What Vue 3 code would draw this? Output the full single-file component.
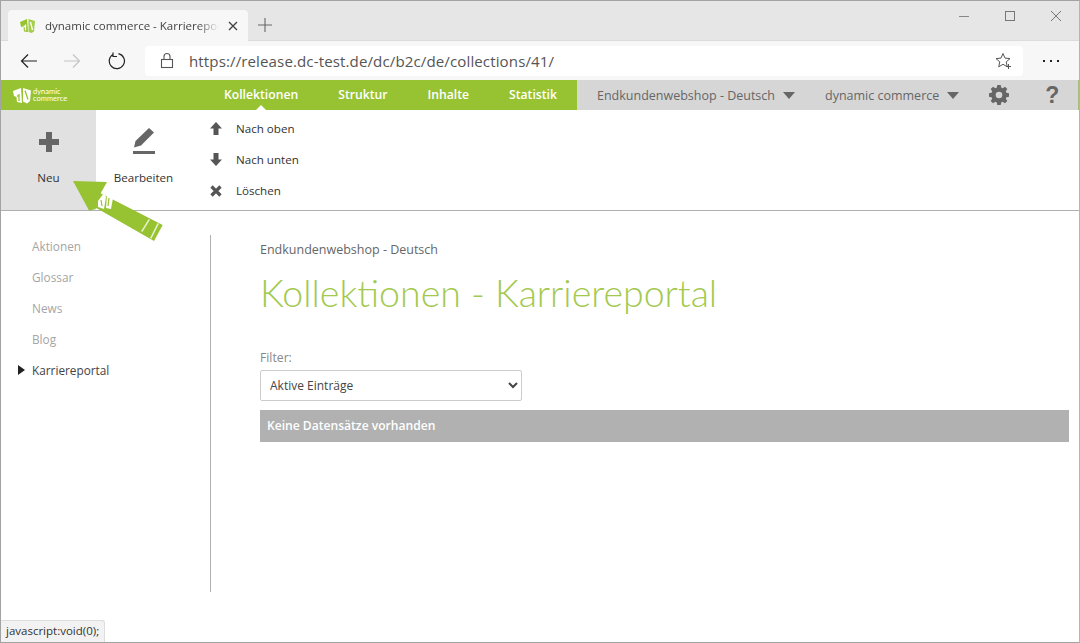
<script setup>
const navItems = ['Kollektionen', 'Struktur', 'Inhalte', 'Statistik']
const sideItems = ['Aktionen', 'Glossar', 'News', 'Blog', 'Karriereportal']
</script>

<template>
  <div class="window">
    <!-- browser chrome -->
    <div class="tabstrip">
      <div class="tab">
        <svg class="favicon" width="16" height="16" viewBox="0 0 16 16">
          <path d="M0 4l7-3 1 13-4-.5-.5-5L1 9z" fill="#97c332" />
          <path d="M8.500 1L15 3l-1 10.500-2.500 1.500-3-1z" fill="#a5cf48" />
          <path d="M5.500 6.500v6M3.500 8.500h2M10.500 4l2 8" stroke="#fff" stroke-width="1.300" fill="none" />
        </svg>
        <span class="tab-title">dynamic commerce - Karrierepor</span>
        <svg class="tab-close" width="10" height="10" viewBox="0 0 10 10">
          <path d="M1 1l8 8M9 1l-8 8" stroke="#444" stroke-width="1.400" />
        </svg>
      </div>
      <svg class="new-tab" width="14" height="14" viewBox="0 0 14 14">
        <path d="M7 0v14M0 7h14" stroke="#666" stroke-width="1.100" />
      </svg>
      <div class="win-btns">
        <svg width="12" height="12" viewBox="0 0 12 12"><path d="M1 6.500h10" stroke="#888" /></svg>
        <svg width="12" height="12" viewBox="0 0 12 12"><rect x="1.500" y="1.500" width="9" height="9" fill="none" stroke="#777" /></svg>
        <svg width="12" height="12" viewBox="0 0 12 12"><path d="M1 1l10 10M11 1L1 11" stroke="#777" /></svg>
      </div>
    </div>
    <div class="toolbar">
      <svg class="tool" width="18" height="16" viewBox="0 0 18 16">
        <path d="M17 8H1.500M8 1.500L1.500 8 8 14.500" fill="none" stroke="#222" stroke-width="1.200" />
      </svg>
      <svg class="tool" width="18" height="16" viewBox="0 0 18 16">
        <path d="M1 8h15.500M10 1.500L16.500 8 10 14.500" fill="none" stroke="#c4c4c4" stroke-width="1.200" />
      </svg>
      <svg class="tool reload" width="18" height="18" viewBox="0 0 18 18">
        <path d="M5.500 2.200A7.600 7.600 0 1 0 10.500 1.600M5 .5v4h4" fill="none" stroke="#222" stroke-width="1.200" />
      </svg>
      <div class="address">
        <svg width="14" height="17" viewBox="0 0 14 17">
          <rect x="1.500" y="7.500" width="11" height="8" fill="none" stroke="#555" stroke-width="1.100" />
          <path d="M4 7.500V4.500a3 3 0 0 1 6 0v3" fill="none" stroke="#555" stroke-width="1.100" />
        </svg>
        <span class="url">https://release.dc-test.de/dc/b2c/de/collections/41/</span>
        <svg class="star" width="17" height="17" viewBox="0 0 17 17">
          <path d="M8 1.500l2 4.600 5 .5-3.800 3.300 1.100 4.900L8 12.300l-4.300 2.500 1.100-4.900L1 6.600l5-.5z" fill="none" stroke="#555" />
          <path d="M13.500 12v5M11 14.500h5" stroke="#555" />
        </svg>
      </div>
      <div class="dots"><i></i><i></i><i></i></div>
    </div>

    <!-- page -->
    <header class="topbar">
      <div class="green">
        <div class="logo">
          <svg width="19" height="17" viewBox="0 0 19 17">
            <path d="M0 4l8-3 1 15-5-1-.5-5L1 9z" fill="#fff" />
            <path d="M10 1l8 2.500-1 10.500-3 2.500-4-2z" fill="#fff" />
            <path d="M6 7v7M4 9h2M12 3.500l3 9" stroke="#97c332" stroke-width="1.300" fill="none" />
          </svg>
          <span class="logo-text">dynamic<br />commerce</span>
        </div>
        <nav class="nav">
          <a v-for="(item, i) in navItems" :key="item" :class="{ active: i === 0 }">{{ item }}</a>
        </nav>
      </div>
      <div class="grey">
        <span class="drop">Endkundenwebshop - Deutsch<i></i></span>
        <span class="drop">dynamic commerce<i></i></span>
        <svg class="gear" width="20" height="20" viewBox="0 0 20 20">
          <path fill="#666" fill-rule="evenodd" d="M8.300 1h3.400l.5 2.600 1.500.6L16 2.700l2.300 2.400-1.500 2.200.6 1.500 2.600.5v3.400l-2.600.5-.6 1.500 1.500 2.200-2.300 2.400-2.300-1.500-1.500.6-.5 2.600H8.300l-.5-2.600-1.500-.6L4 19.300l-2.300-2.400 1.500-2.200-.6-1.500L0 12.700V9.300l2.600-.5.6-1.500-1.500-2.200L4 2.700l2.300 1.500 1.500-.6zM10 7.700a3.300 3.300 0 1 0 0 6.600 3.300 3.300 0 0 0 0-6.600z" transform="translate(0 -1)" />
        </svg>
        <span class="help">?</span>
      </div>
    </header>

    <section class="ribbon">
      <div class="big-btn selected">
        <svg width="22" height="22" viewBox="0 0 22 22"><path d="M8 1h6v7h7v6h-7v7H8v-7H1V8h7z" fill="#666" /></svg>
        <span>Neu</span>
      </div>
      <div class="big-btn">
        <svg width="24" height="28" viewBox="0 0 24 28">
          <path d="M17 1l5 4.500L9 18.500 2 20.500 3.500 14z" fill="#666" />
          <path d="M1 24h22v3H1z" fill="#666" />
        </svg>
        <span>Bearbeiten</span>
      </div>
      <ul class="small-btns">
        <li>
          <svg width="12" height="13" viewBox="0 0 12 13"><path d="M6 0l6 6.500H8.500V13h-5V6.500H0z" fill="#555" /></svg>
          Nach oben
        </li>
        <li>
          <svg width="12" height="13" viewBox="0 0 12 13"><path d="M6 13L0 6.500h3.500V0h5v6.500H12z" fill="#555" /></svg>
          Nach unten
        </li>
        <li>
          <svg width="12" height="12" viewBox="0 0 12 12"><path d="M1.500 1.500l9 9M10.500 1.500l-9 9" stroke="#555" stroke-width="3.200" /></svg>
          Löschen
        </li>
      </ul>
    </section>

    <main class="content">
      <aside class="side">
        <ul>
          <li v-for="item in sideItems" :key="item" :class="{ current: item === 'Karriereportal' }">{{ item }}</li>
        </ul>
      </aside>
      <div class="main">
        <p class="crumb">Endkundenwebshop - Deutsch</p>
        <h1>Kollektionen - Karriereportal</h1>
        <label class="filter-label">Filter:</label>
        <select class="filter">
          <option>Aktive Einträge</option>
        </select>
        <div class="empty">Keine Datensätze vorhanden</div>
      </div>
    </main>

    <!-- annotation arrow over the ribbon -->
    <svg class="pointer" width="92" height="64" viewBox="0 0 92 64">
      <path d="M1 2L35 3 28.700 14.300 90.700 46 82 62 24.700 29.300 17.300 32z" fill="#97c332" />
      <path d="M69.700 52.700l7.600-12.400M78.700 59.300l7.600-15" stroke="#e8f2cf" stroke-width="1.500" />
      <path d="M26 22l6-8 2 4-2 12-6-2zM35 16l6 3-2 11-5-1z" fill="#fff" />
      <path d="M29 21l1 6M37 19l-1 8" stroke="#97c332" stroke-width="1.200" />
    </svg>

    <div class="status">javascript:void(0);</div>
  </div>
</template>

<style>
html, body { margin: 0; background: #fff; }
</style>

<style scoped>
.window {
  position: relative;
  width: 1080px;
  height: 643px;
  box-sizing: border-box;
  border: 1px solid #a3a3a3;
  border-right-color: #b5b5b5;
  overflow: hidden;
  display: flex;
  flex-direction: column;
  background: #fff;
  font-family: "Open Sans", "Noto Sans", sans-serif;
}
.tabstrip {
  height: 40px;
  flex: none;
  box-sizing: border-box;
  background: #e6e6e6;
  display: flex;
  align-items: flex-end;
  padding-left: 7px;
  border-bottom: 1px solid #dcdcdc;
}
.tab {
  width: 240px;
  height: 31px;
  box-sizing: border-box;
  margin-bottom: -1px;
  background: #f7f7f7;
  border-radius: 4px 4px 0 0;
  display: flex;
  align-items: center;
  padding: 0 11px 0 12px;
}
.favicon { flex: none; }
.tab-title {
  margin-left: 9px;
  width: 174px;
  font-size: 11.500px;
  color: #444;
  white-space: nowrap;
  -webkit-mask-image: linear-gradient(to right, #000 88%, transparent 100%);
  mask-image: linear-gradient(to right, #000 88%, transparent 100%);
}
.tab-close { margin-left: 9px; flex: none; }
.new-tab { margin: 0 0 8px 10px; }
.win-btns {
  margin-left: auto;
  align-self: flex-start;
  display: flex;
  gap: 34px;
  padding: 9px 17px 0 0;
}
.toolbar {
  height: 39px;
  flex: none;
  background: #f7f7f7;
  display: flex;
  align-items: center;
  padding-left: 19px;
}
.tool { margin-right: 25px; flex: none; }
.tool.reload { margin: 0 19px 0 2px; }
.address {
  width: 878px;
  height: 30px;
  box-sizing: border-box;
  background: #fff;
  border-radius: 4px;
  display: flex;
  align-items: center;
  padding: 0 11px 0 15px;
}
.url {
  margin-left: 15px;
  font-size: 15.100px;
  color: #555;
  letter-spacing: .1px;
}
.star { margin-left: auto; }
.dots {
  display: flex;
  gap: 5px;
  margin-left: 20px;
}
.dots i {
  width: 2px;
  height: 2px;
  background: #222;
}
.topbar {
  height: 30px;
  flex: none;
  display: flex;
}
.green {
  width: 576px;
  background: #97c332;
  display: flex;
  align-items: center;
}
.logo {
  display: flex;
  align-items: center;
  gap: 1px;
  margin-left: 12px;
  width: 211px;
  color: #fff;
}
.logo-text {
  font-size: 7.500px;
  line-height: 7px;
  font-family: "Lato", sans-serif;
}
.nav {
  display: flex;
  gap: 40px;
  height: 100%;
}
.nav a {
  position: relative;
  color: #fff;
  font-size: 12.200px;
  font-weight: 600;
  line-height: 30px;
}
.nav a.active::after {
  content: "";
  position: absolute;
  left: 50%;
  bottom: 0;
  margin-left: -5px;
  border: 5px solid transparent;
  border-top: 0;
  border-bottom-color: #fff;
}
.grey {
  flex: 1;
  background: #d6d6d6;
  border-right: 1px solid #a5bd7a;
  display: flex;
  align-items: center;
  padding-left: 20px;
  color: #666;
  font-size: 12.500px;
}
.drop {
  display: flex;
  align-items: center;
  margin-right: 30px;
}
.drop i {
  margin-left: 8px;
  border: 6px solid transparent;
  border-bottom: 0;
  border-top: 7px solid #666;
}
.gear { margin-right: 36px; }
.help {
  font-size: 23px;
  font-weight: 700;
  color: #666;
  font-family: "Liberation Sans", sans-serif;
}
.ribbon {
  height: 101px;
  flex: none;
  box-sizing: border-box;
  border-bottom: 1px solid #b0b0b0;
  display: flex;
  font-size: 11.600px;
  color: #333;
}
.big-btn {
  width: 95px;
  display: flex;
  flex-direction: column;
  align-items: center;
  padding-top: 21px;
  box-sizing: border-box;
  position: relative;
}
.big-btn span {
  position: absolute;
  top: 60px;
}
.big-btn.selected { background: #e1e1e1; }
.big-btn:nth-child(2) { padding-top: 17px; }
.small-btns {
  list-style: none;
  margin: 0;
  padding: 3px 0 0 19px;
}
.small-btns li {
  height: 31px;
  display: flex;
  align-items: center;
  gap: 14px;
}
.content {
  flex: 1;
  display: flex;
  min-height: 0;
}
.side {
  width: 210px;
  height: 357px;
  margin-top: 24px;
  box-sizing: border-box;
  border-right: 1px solid #b0b0b0;
  font-size: 11.800px;
  color: #a5a5a5;
}
.side ul {
  list-style: none;
  margin: 0;
  padding: 0 0 0 31px;
}
.side li {
  height: 31px;
  line-height: 22px;
  position: relative;
}
.side li.current { color: #444; }
.side li.current::before {
  content: "";
  position: absolute;
  left: -14px;
  top: 6px;
  border: 5px solid transparent;
  border-right: 0;
  border-left: 7px solid #222;
}
.main {
  flex: 1;
  padding: 29px 10px 0 49px;
}
.crumb {
  margin: 0;
  font-size: 12.500px;
  line-height: 20px;
  color: #666;
}
h1 {
  margin: 11px 0 35px;
  font-size: 37.500px;
  font-weight: 300;
  line-height: 44px;
  color: #a3c94f;
  font-family: "Lato", "Open Sans", sans-serif;
}
.filter-label {
  display: block;
  font-size: 12.200px;
  line-height: 16px;
  color: #888;
}
.filter {
  display: block;
  width: 262px;
  height: 31px;
  margin-top: 4px;
  padding-left: 5px;
  background: #fff;
  border: 1px solid #ccc;
  border-radius: 2px;
  font-family: inherit;
  font-size: 12px;
  color: #444;
}
.empty {
  margin-top: 9px;
  height: 32px;
  padding-left: 7px;
  background: #b1b1b1;
  color: #fff;
  font-size: 12.100px;
  font-weight: 600;
  line-height: 32px;
}
.pointer {
  position: absolute;
  left: 71px;
  top: 178px;
}
.status {
  position: absolute;
  left: 0;
  bottom: 0;
  height: 21px;
  padding: 0 5px;
  background: #f2f2f2;
  border: 1px solid #ddd;
  border-width: 1px 1px 0 0;
  border-radius: 0 3px 0 0;
  font-size: 11.500px;
  line-height: 20px;
  color: #333;
}
</style>
